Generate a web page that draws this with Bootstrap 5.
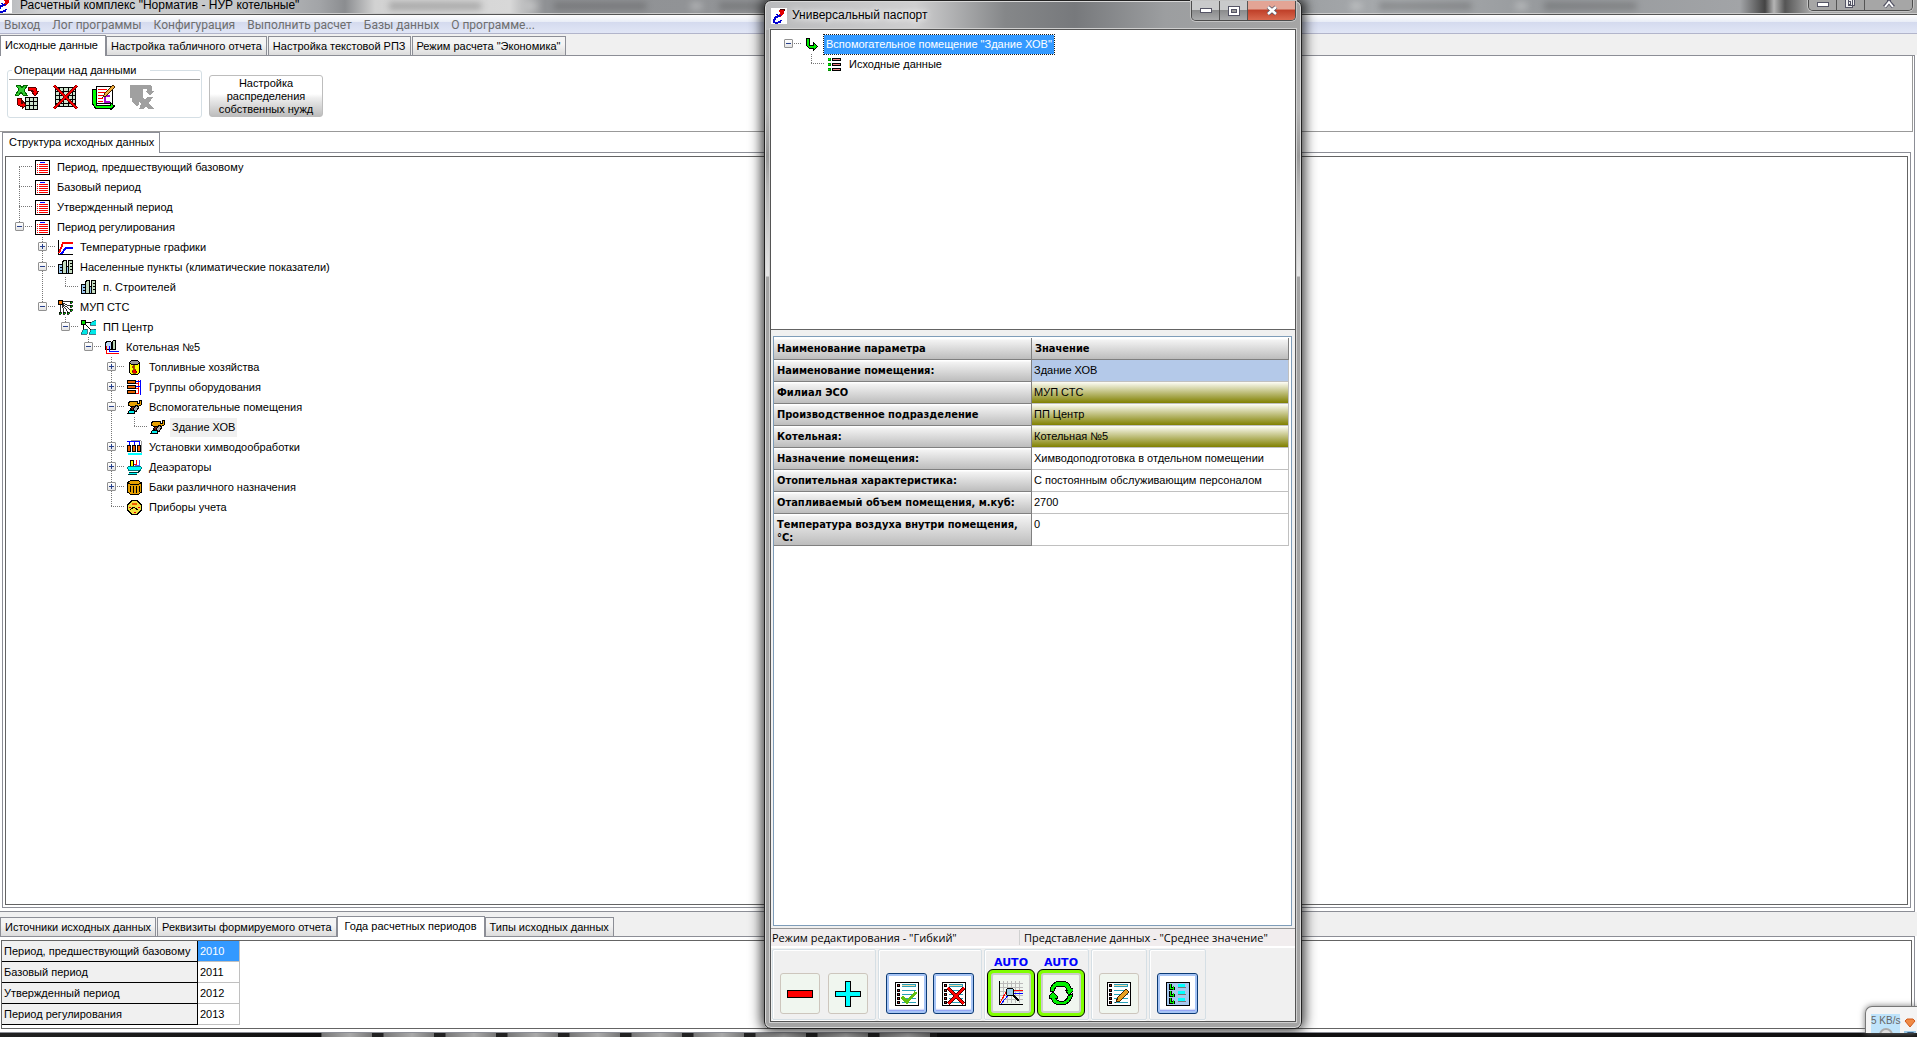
<!DOCTYPE html>
<html lang="ru">
<head>
<meta charset="utf-8">
<meta name="viewport" content="width=device-width, initial-scale=1">
<title>Расчетный комплекс "Норматив - НУР котельные"</title>
<link href="https://cdn.jsdelivr.net/npm/bootstrap@5.3.0/dist/css/bootstrap.min.css" rel="stylesheet">
<style>
body{font:11px/13px "Liberation Sans",Arial,sans-serif;color:#000;background:#fff}
button{font:inherit;color:inherit}
svg{display:block;flex:none;shape-rendering:crispEdges}
.smooth{shape-rendering:auto}
.caption-font{font:12px/14px "Liberation Sans",Arial,sans-serif}

/* main window */
.app-title{height:15px;border-bottom:1px solid #555;box-shadow:inset 0 -1px #cdcdcd;background:linear-gradient(90deg,#b4b6b9 0,#cfd0d2 40px,#c4c6c8 240px,#a2a4a7 320px,#8b8d90 345px,#d2d2d2 375px,#d8d8d8 510px,#8f9194 545px,#929497 760px,#a8a8a8 1000px,#9da0a3 1300px,#a8abae 1400px,#96999c 1550px,#a2a4a7 1740px,#444 1765px,#b5b5b5 1774px,#555 1785px,#a5a5a5 1810px)}
.app-title .title-text{line-height:14px;margin-top:-2px}
.haze{height:8px;margin:2px 160px 0 90px;filter:blur(3px);opacity:.3;background:repeating-linear-gradient(90deg,#444 0 90px,transparent 95px 135px,#eee 138px 146px,transparent 150px 165px)}
.menu-strip{height:19px;gap:12px;border-bottom:1px solid #b2b5cb;background:linear-gradient(#fff 0,#e8ecf6 7px,#d4daee 7px,#e1e6f6 18px)}
.menu-strip a{font:12px/20px Roboto,"Noto Sans",sans-serif;color:#6e6e6e;text-decoration:none}
.tab-strip{background:#f0f0f0;height:21px}
.tab-strip.low{height:24px}
.tab-item{height:19px;padding:1px 4px 0;border:1px solid #8c8e96;border-bottom:0;background:linear-gradient(#f4f4f4 40%,#dcdcdc);white-space:nowrap}
.tab-item + .tab-item{margin-left:1px}
.tab-item.current{height:21px;padding:0 7px 2px;background:#fff;margin-bottom:-1px;position:relative;margin-left:0}
.tab-item.current:first-child{padding-left:4px}
.tab-item.current + .tab-item{margin-left:0}
.struct-strip{padding-left:2px}
.struct-strip .tab-item.current{padding-left:6px;padding-right:5px}
.page-box{border:1px solid #8c8e96;border-left:0;margin-right:2px}
.tool-zone{height:76px;border-bottom:1px solid #999;border-right:1px solid #999;margin-right:1px}
.frame-outer{border:1px solid #8c8e96;margin:0 3px 3px 2px;padding:3px 2px 2px}
.frame-inner{border:1px solid #646464;background:#fff}
.ops{width:195px;height:54px;margin-top:8px;margin-left:7px}
.ops-box{border:1px solid #d5dfe5;border-radius:3px;height:48px;margin-top:6px;padding:8px 1px 0}
.ops legend{font:inherit;width:auto;background:#fff;padding:0 14px 0 2px;margin:0 0 0 5px;height:13px;position:absolute;float:none}
.ops-line{border-top:1px solid #999;padding:4px 0 0 6px;gap:13px}
.flat{border:0;background:none;padding:0}
.big-btn{width:114px;height:42px;margin:19px 0 0 7px;border:1px solid #bdbdbd;border-radius:3px;background:linear-gradient(#fff 45%,#eee 55%,#bdbdbd);padding:0}

/* trees */
.tree,.tree ul{list-style:none;margin:0;padding:0}
.tree ul{padding-left:23px}
.tree li{position:relative}
.tree li::before{content:"";position:absolute;left:13px;top:0;bottom:0;width:1px;background:repeating-linear-gradient(#777 0 1px,#fff 1px 2px)}
.tree li:last-child::before{bottom:auto;height:10px}
.tree > li:first-child::before{top:10px}
.tree.single > li::before{display:none}
.node{height:20px;display:flex;align-items:center;padding-left:29px;position:relative}
.node::before{content:"";position:absolute;left:13px;top:9px;width:13px;height:1px;background:repeating-linear-gradient(90deg,#777 0 1px,#fff 1px 2px)}
.node span{margin-left:5px;padding:3px 2px;white-space:nowrap}
.node svg{width:15px;height:15px}
.expander{position:absolute;left:9px;top:5px;width:9px;height:9px;border:1px solid #919191;border-radius:1px;background:linear-gradient(#fff,#e4e4e4);padding:0}
.expander::before{content:"";position:absolute;left:1px;top:3px;width:5px;height:1px;background:#27408b}
.expander.plus::after{content:"";position:absolute;left:3px;top:1px;width:1px;height:5px;background:#27408b}
.node .quiet{background:#f0f0f0}
.node .picked{background:#39f;color:#fff;outline:1px dotted #1a1a1a}

/* lower table */
.years-page{padding:3px 2px 3px 1px}
.years-box{height:89px}
.years{border-collapse:separate;border-spacing:0}
.years th,.years td{height:21px;padding:0 2px;font-weight:400;vertical-align:middle}
.years th{width:196px;background:#f0f0f0;border-right:1px solid #000;border-bottom:1px solid #000}
.years td{width:42px;border-right:1px solid #c0c0c0;border-bottom:1px solid #c0c0c0}
.years .hot{background:#39f;color:#fff}
.task-strip{height:4px;background:linear-gradient(90deg,#222,#111 321px,transparent 321px,transparent 937px,#111 937px),repeating-linear-gradient(90deg,#222 0 11px,#777 12px,#aaa 40px,#777 62px) 310px 0,#222}
.speed{position:absolute;right:0;bottom:4px;width:52px;height:27px;border:1px solid #777;border-width:1px 0 0 1px;border-radius:7px 0 0 0;background:#f4f4f4;box-shadow:0 0 6px #777;padding:7px 2px 0 5px;overflow:hidden}
.speed-val{width:29px;height:20px;background:#bfe4fb;color:#666;font-size:10px}

/* passport window */
.passport{position:absolute;left:764px;top:0;bottom:8px;width:538px;padding:0 5px 6px;border:1px solid #222;border-radius:7px;background:linear-gradient(transparent 29px,#a9a9a9 29px,#b4b4b4 110px,#999 155px,#b4b4b4 185px,#e6e6e6 275px,#a4a4a4 276px),linear-gradient(90deg,#b9babc,#cfcfd0 150px,#858789 240px,#77797c 310px,#9c9ea0 400px,#a5a5a5);box-shadow:inset 0 0 0 1px #d8d8d8,0 0 13px 2px rgba(0,0,0,.85)}
.pass-title{height:28px}
.pass-title .title-text{margin:7px 0 0 5px;text-shadow:0 0 6px #fff,0 0 8px #fff}
.pass-title > svg{margin:7px 0 0 1px}
.win-btns{height:20px;border:1px solid #4c4c4c;border-top:0;border-radius:0 0 5px 5px;overflow:hidden;box-shadow:0 0 0 1px #c4c4c4}
.win-btns button{width:28px;border:0;border-right:1px solid #555;padding:0;display:flex;align-items:center;justify-content:center;background:linear-gradient(#c9cacb 45%,#8b8c8d 50%,#a9aaab)}
.win-btns .shut{width:47px;border:0;background:linear-gradient(#e3a495 40%,#c0412a 50%,#d9694f)}
.main-btns{height:11px}
.main-btns button,.main-btns .shut{background:#a6a6a6}
.client{border:1px solid #555;background:#f0f0f0;box-shadow:0 0 0 1px #cfcfcf}
.pass-tree{height:300px;background:#fff;border-bottom:1px solid #646464;padding:4px 0 0 4px}
.grid-box{margin:6px 3px 0 2px;border:1px solid #7f9db9;background:#fff;padding:1px 0 0}
.params{border-collapse:separate;border-spacing:0;table-layout:fixed;width:calc(100% - 2px)}
.params th,.params td{height:22px;padding:4px 2px 1px;vertical-align:top;line-height:13px}
.params th{font-family:"DejaVu Sans Condensed","DejaVu Sans",sans-serif;font-weight:700;padding-left:3px;background:linear-gradient(#fff 1px,#f3f3f3 2px,#bdbdbd);border-right:1px solid #808080;border-bottom:1px solid #808080}
.params col:first-child{width:258px}
.params td{border-right:1px solid #c0c0c0;border-bottom:1px solid #c0c0c0}
.params .edit{background:#b4c9e9}
.params .olive{background:linear-gradient(#fdfdf6,#808000)}
.status{margin-top:2px;border-top:1px solid #999;height:20px;background:#f1edee;font:11px/17px "Open Sans","Noto Sans",sans-serif;border-bottom:2px solid #fff}
.status div{padding-left:4px}
.status div:first-child{width:249px;border-right:1px solid #d0d0d0;margin:1px 0;padding-left:1px;line-height:15px}
.tools{height:73px;gap:2px;padding:1px}
.grp{border:1px solid #d5dfe5;border-radius:2px;display:flex;align-items:flex-end;padding:0 7px 5px;gap:6px;box-shadow:inset 1px 1px #fff,0 1px #fff}
.grp.wide-gap{gap:8px}
.grp.auto-grp{padding:0 3px 2px 2px;gap:2px}
.sq{width:40px;height:41px;border:1px solid #cdc6bd;border-radius:3px;background:#f0f6ef;padding:0;display:flex;align-items:center;justify-content:center}
.sq.live{width:41px;border:1px solid #0a3a75;background:#fff;box-shadow:inset 0 0 0 2px #a6c4f5,inset 0 -3px 2px #6f86ee}
.auto{color:#00f;font:700 11px/13px "DejaVu Sans","Noto Sans",sans-serif;text-align:center;width:48px}
.green{width:48px;height:48px;border:1px solid #000;border-radius:6px;background:#80ff00;padding:3px}
.green span{height:40px;border:2px solid #ccc;border-radius:3px;background:#f0f6ef;display:flex;align-items:center;justify-content:center}
</style>
</head>
<body class="vh-100 overflow-hidden d-flex flex-column position-relative">
<svg width="0" height="0" class="position-absolute" aria-hidden="true">
<defs>
<symbol id="logo" viewBox="0 0 16 16"><path fill="#fff" d="M0 0h16v16H0z"/><path d="M7 3l3-2 3 1v3L9 9 6 8l3-3z" fill="#e00000"/><path d="M9 8L5 9l-2 3v2l2 1 4-1 1-2" fill="none" stroke="#0000d0" stroke-width="2"/><path d="M4 6l6 1-2 2z" fill="#0000d0"/><path d="M9 1h4v2" fill="none" stroke="#400"/></symbol>
<symbol id="doc" viewBox="0 0 15 15"><path d="M.5.5h14v14H.5z" fill="#fff" stroke="#000"/><path d="M5 2.5h5" stroke="#00f"/><path d="M4 4.500h9M4 6.500h9M4 8.500h9M4 10.500h9M4 12.500h9M2 4.500h1M2 6.500h1M2 8.500h1M2 10.500h1M2 12.500h1" stroke="#f00"/></symbol>
<symbol id="graph" viewBox="0 0 15 15"><path d="M.5 0v14.500H15" fill="none" stroke="#000"/><path d="M1 13L5 3h10" fill="none" stroke="#f00" stroke-width="2"/><path d="M3 14L8 8h7" fill="none" stroke="#00f" stroke-width="2"/></symbol>
<symbol id="city" viewBox="0 0 15 15"><path d="M4.500 1.500h1v-1h3v13h-4zM10.500.500h4v13h-4z" fill="#c4dcc0" stroke="#000"/><path d="M.5 4.500h4v9h-4zM8.500 6.500h2v7h-2z" fill="#9cc8f0" stroke="#000"/><path d="M2 7.500h2M2 10.500h2M12 3.500h2M12 6.500h2M12 9.500h2" stroke="#000"/></symbol>
<symbol id="org" viewBox="0 0 15 15"><path d="M2.500 3v9M4 4l2 8M4 4l6 8M4 3l8 7M4 3l8 3M4 1.500h8" stroke="#000" fill="none" stroke-width=".8"/><path d="M.5.500h4v4h-4z" fill="#f07000" stroke="#000"/><path d="M12 1h2v2h-2zM12 5h2v2h-2zM12 9h2v2h-2zM1 12h2v2H1zM5 12h2v2H5zM9 12h2v2H9z" fill="#0c0" stroke="#000" stroke-width=".8"/></symbol>
<symbol id="dept" viewBox="0 0 15 15"><path d="M4 2.500h6M2.500 4v6M4 4l7 7" stroke="#000"/><path d="M.5.500h4v4h-4z" fill="#0d0" stroke="#000"/><path d="M9 4l2-2 4-2v5H9zM0 14l2-4 4-1v5H0zM8 14l2-4 5-1v5H8z" fill="#00e8e8" stroke="#045" stroke-width=".7"/></symbol>
<symbol id="boiler" viewBox="0 0 15 15"><path d="M1.500 7V3l2-2h3l1 2v6h-6z" fill="#bcd8f4" stroke="#000"/><path d="M8.500 2v7h3V.5h-2z" fill="#b9d6b4" stroke="#000"/><path d="M2.500 6v7.500H15" fill="none" stroke="#f00"/><path d="M5.500 6v5.500H15" fill="none" stroke="#00f"/></symbol>
<symbol id="fuel" viewBox="0 0 15 15"><path d="M2.500 2.500v10l2 2h6l2-2v-10z" fill="#ff0" stroke="#000"/><path d="M2.500 2.500l2-2h6l2 2-2 2h-6z" fill="#999" stroke="#000"/><path d="M5 7l2-2v3l3 4-1 1H6l-1-2 2-2z" fill="#e00" stroke="#300" stroke-width=".6"/></symbol>
<symbol id="equip" viewBox="0 0 15 15"><path d="M.5.500h8v3h-8zM.5 5.500h8v3h-8zM.5 10.500h8v3h-8z" fill="#e66000" stroke="#000"/><path d="M9 3.500h3M9 8.500h3M9 13.500h3M11.500 0v14" stroke="#f00"/><path d="M9 1.500h4M9 6.500h4M13.500 0v15" stroke="#00f"/></symbol>
<symbol id="room" viewBox="0 0 15 15"><path d="M1.500 5V2.500l2-1h7v2h2V0h2v4.500l-3 2h-8z" fill="#e8a000" stroke="#000"/><path d="M3 9l3-3 3 1-3 4z" fill="#702010" stroke="#000"/><path d="M6 10l3-5 3 2-3 5z" fill="#aaa" stroke="#000"/><path d="M.5 13.500l2-3h5v3z" fill="#0ee" stroke="#000"/></symbol>
<symbol id="chem" viewBox="0 0 15 15"><path d="M4 .5h10M14.500 1v12" stroke="#999"/><path d="M0 1.500h12M2.500 1v4M7.500 1v4M12.500 1v4" stroke="#00f"/><path d="M.5 5.500h3v6h-3zM5.500 5.500h3v6h-3zM10.500 5.500h3v6h-3z" fill="#e66000" stroke="#000"/><path d="M1 14h14" stroke="#0ff" stroke-width="2"/></symbol>
<symbol id="deaer" viewBox="0 0 15 15"><path d="M3.500.500h3v7h-3z" fill="#ff0" stroke="#000"/><path d="M9.500 0v4.500H7" fill="none" stroke="#f00"/><path d="M12.500 0v5.500H8" fill="none" stroke="#55f"/><path d="M.5 7.500l1-1h12l1 1-1 3h-12z" fill="#0ff" stroke="#077"/><path d="M2 12.500h9l2-2M1 14.500h9" fill="none" stroke="#033"/><path d="M2 13.500h8" stroke="#0ff"/></symbol>
<symbol id="tank" viewBox="0 0 15 15"><path d="M.5 3l3-2.500h8l3 2.500v9l-3 2.500h-8l-3-2.500z" fill="#e8a000" stroke="#000"/><path d="M1 3l3 1.500h7L14 3M3.500 6v6M6.500 6v7M9.500 6v7M12 6v6" fill="none" stroke="#000"/></symbol>
<symbol id="meter" viewBox="0 0 15 15"><path d="M5 .5h5L14.500 5v5L10 14.500H5L.5 10V5z" fill="#f0e040" stroke="#000"/><path d="M5 3.500h5" stroke="#f06000" stroke-width="2"/><path d="M3 10l4-3 4 3" stroke="#000" fill="none"/><path d="M2 7.500h2M11 7.500h2M7 12.500h2" stroke="#e00"/></symbol>
<symbol id="arrow" viewBox="0 0 15 15"><path d="M2.500 1.500h3v7h4v-3l4 4-4 4v-2h-4l-3-3z" fill="#0e0" stroke="#000"/></symbol>
<symbol id="list" viewBox="0 0 15 15"><path d="M5.500 1.500h8v2h-8zM5.500 6.500h8v2h-8zM5.500 11.500h8v2h-8z" fill="#f08080" stroke="#000"/><path d="M1 1h3v3H1zM1 6h3v3H1zM1 11h3v3H1z" fill="#080"/><path d="M2 1h1v2H1V2h1zM1 7h2v1H1zM1 12h2v1H1z" fill="#0f0"/></symbol>
<symbol id="sheet" viewBox="0 0 24 24"><path d="M.5.500h23v23H.5z" fill="#fff" stroke="#000"/><path d="M7 3.500h14" stroke="#28a0b8" stroke-width="3"/><path d="M7 3.500h13" stroke="#f5d9a8"/><path d="M7 8.500h14M7 12.500h14M7 16.500h14M7 20.500h14" stroke="#28a0b8"/><path d="M2.500 2.500h2v2h-2zM2.500 7.500h2v2h-2zM2.500 11.500h2v2h-2zM2.500 15.500h2v2h-2zM2.500 19.500h2v2h-2z" fill="#b22" stroke="#000"/></symbol>
<symbol id="grid" viewBox="0 0 24 24"><path d="M2 3h20v18H2z" fill="#cde3cd"/><path d="M2.500 2.500h19v19h-19zM6.500 2v20M10.500 2v20M14.500 2v20M18.500 2v20M2 6.500h20M2 10.500h20M2 14.500h20M2 18.500h20" fill="none" stroke="#000"/></symbol>
</defs>
</svg>

<header class="app-title d-flex flex-shrink-0">
  <svg width="12" height="14" viewBox="4 4 12 12"><use href="#logo" width="16" height="16"/></svg>
  <span class="title-text caption-font flex-shrink-0 ps-2">Расчетный комплекс "Норматив - НУР котельные"</span>
  <div class="haze flex-grow-1"></div>
  <div class="win-btns main-btns d-flex me-1">
    <button type="button" aria-label="Свернуть"><svg width="12" height="6"><path d="M.5.500h11v4H.5z" fill="#fff" stroke="#556"/></svg></button>
    <button type="button" aria-label="Восстановить"><svg width="11" height="11"><path d="M3.500 0v5h6V0M.5 0v7h7V0M3 1h2v3H3z" fill="#eee" stroke="#556"/></svg></button>
    <button type="button" class="shut" aria-label="Закрыть"><svg class="smooth" width="14" height="10"><path d="M2.500 7L7 2l4.500 5M7 3V0" fill="none" stroke="#556" stroke-width="4"/><path d="M3 7L7 2l4 5" fill="none" stroke="#fff" stroke-width="2"/></svg></button>
  </div>
</header>

<nav class="menu-strip d-flex ps-1 flex-shrink-0">
  <a href="#">Выход</a><a href="#">Лог программы</a><a href="#">Конфигурация</a><a href="#">Выполнить расчет</a><a href="#">Базы данных</a><a href="#">О программе...</a>
</nav>

<div class="tab-strip d-flex align-items-end flex-shrink-0" role="tablist">
  <button class="tab-item current" role="tab">Исходные данные</button><button class="tab-item" role="tab">Настройка табличного отчета</button><button class="tab-item" role="tab">Настройка текстовой РПЗ</button><button class="tab-item" role="tab">Режим расчета "Экономика"</button>
</div>

<main class="page-box flex-grow-1 d-flex flex-column">
  <div class="tool-zone d-flex flex-shrink-0">
    <fieldset class="ops">
      <legend>Операции над данными</legend>
      <div class="ops-box">
        <div class="ops-line d-flex">
          <button class="flat" aria-label="Импорт из Excel"><svg width="25" height="26" viewBox="0 0 25 26"><path d="M1 1h4l2 3 2-3h4L9 6l3 5H8L6 8l-2 3H0l4-5z" fill="#3c3" stroke="#060"/><path d="M10.500 13.500h12v12h-12zM14.500 13v12M18.500 13v12M10 17.500h12M10 21.500h12" fill="#cde3cd" stroke="#000"/><path d="M13 3h5q4 0 4 4h2l-4 5-4-5h2q0-1-5-1zM3 14h3v5h1v-3l4 5-4 4v-3H5q-3 0-3-5z" fill="#f00" stroke="#500"/></svg></button>
          <button class="flat" aria-label="Очистить"><svg width="25" height="26" viewBox="0 0 24 24"><use href="#grid"/><path d="M1 1l22 22M23 1L1 23" stroke="#700" stroke-width="3"/><path d="M1 1l22 22M23 1L1 23" stroke="#f00" stroke-width="2"/></svg></button>
          <button class="flat" aria-label="Правка"><svg width="25" height="26" viewBox="0 0 25 26"><path d="M5.500 2.500h16v17h-16z" fill="#fff" stroke="#000"/><path d="M7 5.500h9M7 8.500h8M7 11.500h7M7 14.500h5M7 17.500h5" stroke="#f00"/><path d="M14 12h5M14 12v6h5" stroke="#a0c" stroke-width="2" fill="none"/><path d="M12 13l2-4L22 1l2 2-9 9z" fill="#f0b040" stroke="#420"/><path d="M1.500 5v15l3 4h15v2l4-4-4-3v2H5V5z" fill="#0f0" stroke="#000"/></svg></button>
          <button class="flat" aria-label="Экспорт" disabled><svg width="25" height="26" viewBox="0 0 25 26"><path d="M1 1h20l2 2v4h2l-4 5-5-5h2V5h-4v9l2 1 3-2h5l-4 6 5 6h-6l-2-3-3 3h-4l2-5-2-2v2l-2 3-5-5V14H1z" fill="#a0a0a0"/></svg></button>
        </div>
      </div>
    </fieldset>
    <button class="big-btn">Настройка<br>распределения<br>собственных нужд</button>
  </div>
  <div class="struct-strip d-flex flex-shrink-0" role="tablist"><button class="tab-item current" role="tab">Структура исходных данных</button></div>
  <div class="frame-outer flex-grow-1 d-flex">
    <div class="frame-inner flex-grow-1">
      <ul class="tree">
        <li><div class="node"><svg><use href="#doc"/></svg><span>Период, предшествующий базовому</span></div></li>
        <li><div class="node"><svg><use href="#doc"/></svg><span>Базовый период</span></div></li>
        <li><div class="node"><svg><use href="#doc"/></svg><span>Утвержденный период</span></div></li>
        <li><div class="node"><button class="expander" aria-label="Свернуть"></button><svg><use href="#doc"/></svg><span>Период регулирования</span></div>
          <ul>
            <li><div class="node"><button class="expander plus" aria-label="Развернуть"></button><svg><use href="#graph"/></svg><span>Температурные графики</span></div></li>
            <li><div class="node"><button class="expander" aria-label="Свернуть"></button><svg><use href="#city"/></svg><span>Населенные пункты (климатические показатели)</span></div>
              <ul><li><div class="node"><svg><use href="#city"/></svg><span>п. Строителей</span></div></li></ul></li>
            <li><div class="node"><button class="expander" aria-label="Свернуть"></button><svg><use href="#org"/></svg><span>МУП СТС</span></div>
              <ul><li><div class="node"><button class="expander" aria-label="Свернуть"></button><svg><use href="#dept"/></svg><span>ПП Центр</span></div>
                <ul><li><div class="node"><button class="expander" aria-label="Свернуть"></button><svg><use href="#boiler"/></svg><span>Котельная №5</span></div>
                  <ul>
                    <li><div class="node"><button class="expander plus" aria-label="Развернуть"></button><svg><use href="#fuel"/></svg><span>Топливные хозяйства</span></div></li>
                    <li><div class="node"><button class="expander plus" aria-label="Развернуть"></button><svg><use href="#equip"/></svg><span>Группы оборудования</span></div></li>
                    <li><div class="node"><button class="expander" aria-label="Свернуть"></button><svg><use href="#room"/></svg><span>Вспомогательные помещения</span></div>
                      <ul><li><div class="node"><svg><use href="#room"/></svg><span class="quiet">Здание ХОВ</span></div></li></ul></li>
                    <li><div class="node"><button class="expander plus" aria-label="Развернуть"></button><svg><use href="#chem"/></svg><span>Установки химводообработки</span></div></li>
                    <li><div class="node"><button class="expander plus" aria-label="Развернуть"></button><svg><use href="#deaer"/></svg><span>Деаэраторы</span></div></li>
                    <li><div class="node"><button class="expander plus" aria-label="Развернуть"></button><svg><use href="#tank"/></svg><span>Баки различного назначения</span></div></li>
                    <li><div class="node"><svg><use href="#meter"/></svg><span>Приборы учета</span></div></li>
                  </ul></li></ul></li></ul></li>
          </ul></li>
      </ul>
    </div>
  </div>
</main>

<div class="tab-strip low d-flex align-items-end flex-shrink-0" role="tablist">
  <button class="tab-item" role="tab">Источники исходных данных</button><button class="tab-item" role="tab">Реквизиты формируемого отчета</button><button class="tab-item current" role="tab">Года расчетных периодов</button><button class="tab-item" role="tab">Типы исходных данных</button>
</div>
<section class="page-box years-page flex-shrink-0">
  <div class="frame-inner years-box">
    <table class="years">
      <tr><th scope="row">Период, предшествующий базовому</th><td class="hot">2010</td></tr>
      <tr><th scope="row">Базовый период</th><td>2011</td></tr>
      <tr><th scope="row">Утвержденный период</th><td>2012</td></tr>
      <tr><th scope="row">Период регулирования</th><td>2013</td></tr>
    </table>
  </div>
</section>
<footer class="task-strip flex-shrink-0"></footer>

<aside class="speed d-flex">
  <div class="speed-val text-nowrap">5 KB/s<svg class="smooth mx-auto" width="16" height="8"><circle cx="8" cy="8" r="6" fill="#ddd" stroke="#aaa" stroke-width="2"/></svg></div>
  <svg class="smooth ms-1 mt-1" width="12" height="18"><path d="M1 3l2-2h6l2 2-5 6z" fill="#f08a45" stroke="#d0591a"/><path d="M0 13h12v5H0z" fill="#9cc8e4"/><path d="M1 16l3-2h5l3 2z" fill="#357"/></svg>
</aside>

<section class="passport d-flex flex-column" role="dialog" aria-label="Универсальный паспорт">
  <div class="pass-title d-flex flex-shrink-0">
    <svg width="16" height="16"><use href="#logo"/></svg>
    <span class="title-text caption-font me-auto">Универсальный паспорт</span>
    <div class="win-btns d-flex">
      <button type="button" aria-label="Свернуть"><svg width="12" height="6"><path d="M.5.500h11v4H.5z" fill="#fff" stroke="#556"/></svg></button>
      <button type="button" aria-label="Развернуть"><svg width="12" height="10"><path d="M.5.500h11v9H.5z" fill="#fff" stroke="#556"/><path d="M3.500 3.500h5v3h-5z" fill="#999" stroke="#556"/></svg></button>
      <button type="button" class="shut" aria-label="Закрыть"><svg class="smooth" width="14" height="11"><path d="M3 2l8 7M11 2l-8 7" stroke="#556" stroke-width="4"/><path d="M3 2l8 7M11 2l-8 7" stroke="#fff" stroke-width="2.500"/></svg></button>
    </div>
  </div>
  <div class="client flex-grow-1 d-flex flex-column">
    <div class="pass-tree flex-shrink-0">
      <ul class="tree single">
        <li><div class="node"><button class="expander" aria-label="Свернуть"></button><svg><use href="#arrow"/></svg><span class="picked">Вспомогательное помещение "Здание ХОВ"</span></div>
          <ul><li><div class="node"><svg><use href="#list"/></svg><span>Исходные данные</span></div></li></ul></li>
      </ul>
    </div>
    <div class="grid-box flex-grow-1">
      <table class="params">
        <colgroup><col><col></colgroup>
        <tr><th>Наименование параметра</th><th>Значение</th></tr>
        <tr><th scope="row">Наименование помещения:</th><td class="edit">Здание ХОВ</td></tr>
        <tr><th scope="row">Филиал ЭСО</th><td class="olive">МУП СТС</td></tr>
        <tr><th scope="row">Производственное подразделение</th><td class="olive">ПП Центр</td></tr>
        <tr><th scope="row">Котельная:</th><td class="olive">Котельная №5</td></tr>
        <tr><th scope="row">Назначение помещения:</th><td>Химводоподготовка в отдельном помещении</td></tr>
        <tr><th scope="row">Отопительная характеристика:</th><td>С постоянным обслуживающим персоналом</td></tr>
        <tr><th scope="row">Отапливаемый объем помещения, м.куб:</th><td>2700</td></tr>
        <tr><th scope="row">Температура воздуха внутри помещения, °С:</th><td>0</td></tr>
      </table>
    </div>
    <div class="status d-flex flex-shrink-0 text-nowrap"><div>Режим редактирования - "Гибкий"</div><div>Представление данных - "Среднее значение"</div></div>
    <div class="tools d-flex flex-shrink-0">
      <div class="grp wide-gap">
        <button class="sq" aria-label="Удалить"><svg width="26" height="8"><path d="M.5.500h25v7H.5z" fill="#f00" stroke="#000"/></svg></button>
        <button class="sq" aria-label="Добавить"><svg width="26" height="26"><path d="M10.500.500h5v10h10v5h-10v10h-5v-10H.500v-5h10z" fill="#0ff" stroke="#000"/></svg></button>
      </div>
      <div class="grp">
        <button class="sq live" aria-label="Принять"><svg width="24" height="24"><use href="#sheet"/><path d="M7 15l5 5 9-10" fill="none" stroke="#60c010" stroke-width="3"/></svg></button>
        <button class="sq live" aria-label="Отменить"><svg width="24" height="24"><use href="#sheet"/><path d="M6 6l16 16M22 6L6 22" stroke="#500" stroke-width="4"/><path d="M6 6l16 16M22 6L6 22" stroke="#f00" stroke-width="2"/></svg></button>
      </div>
      <div class="grp auto-grp">
        <div><div class="auto">AUTO</div><button class="green d-block" aria-label="Автографик"><span><svg width="24" height="24"><path d="M4.500 0v22M8.500 0v22M12.500 0v22M16.500 0v22M20.500 0v22M1 2.500h23M1 6.500h23M1 10.500h23M1 14.500h23M1 18.500h23" stroke="#bbb"/><path d="M.500 0v23.500H24" fill="none" stroke="#000"/><path d="M1 22L8 9h16" fill="none" stroke="#f00"/><path d="M2 23l9-11h13" fill="none" stroke="#00f"/><circle cx="11" cy="11" r="4" fill="#9bcbe8" stroke="#000"/><path d="M14 14l6 6" stroke="#000" stroke-width="2"/></svg></span></button></div>
        <div><div class="auto">AUTO</div><button class="green d-block" aria-label="Автообновление"><span><svg width="24" height="24"><path d="M1 11V8q3-7 8-7.500h6q5 .5 7 6.500h2v3l-3 3h-2l-3-4h2q-1-3-4-4H9q-3 1-4 5z" fill="#0e0" stroke="#000"/><path d="M23 13v3q-3 7-8 7.500H9q-5-.5-7-6.500H0v-2l4-4 4 4v2H6q1 2 4 3h5q3-1 4-5z" fill="#0e0" stroke="#000"/></svg></span></button></div>
      </div>
      <div class="grp"><button class="sq" aria-label="Изменить"><svg width="24" height="24"><use href="#sheet"/><path d="M9 20l2-5L19 7l3 3-9 9z" fill="#e8a020" stroke="#420"/></svg></button></div>
      <div class="grp"><button class="sq live" aria-label="Список"><svg width="24" height="24"><path d="M.5.500h23v23H.5z" fill="#a5c8f0" stroke="#000"/><path d="M12 3.500h7M12 10.500h7M12 17.500h7" stroke="#0ff" stroke-width="3"/><path d="M12 5.500h8M12 12.500h8M12 19.500h8" stroke="#777"/><path d="M4 2v4h5M4 9v4h5M4 16v4h5" fill="none" stroke="#000" stroke-width="3"/><path d="M4 2v4h4M4 9v4h4M4 16v4h4M7.500 4v4M7.500 11v4M7.500 18v4" fill="none" stroke="#0e0"/></svg></button></div>
    </div>
  </div>
</section>
<script src="https://cdn.jsdelivr.net/npm/bootstrap@5.3.0/dist/js/bootstrap.bundle.min.js"></script>
</body>
</html>
